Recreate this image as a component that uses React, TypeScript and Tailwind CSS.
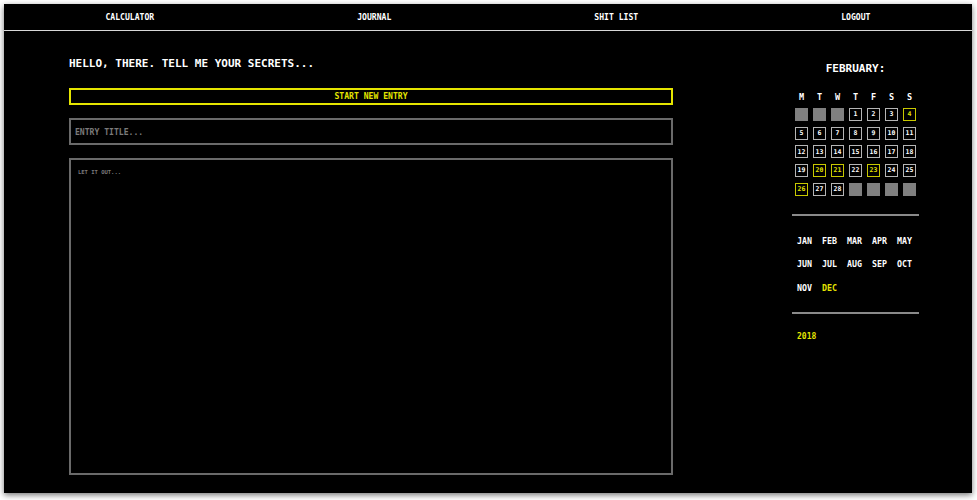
import React from "react";

const Y = "#e5e500";

type Cell = { n?: number; hl?: boolean };

const rows: Cell[][] = [
  [{}, {}, {}, { n: 1 }, { n: 2 }, { n: 3 }, { n: 4, hl: true }],
  [5, 6, 7, 8, 9, 10, 11].map((n) => ({ n })),
  [12, 13, 14, 15, 16, 17, 18].map((n) => ({ n })),
  [{ n: 19 }, { n: 20, hl: true }, { n: 21, hl: true }, { n: 22 }, { n: 23, hl: true }, { n: 24 }, { n: 25 }],
  [{ n: 26, hl: true }, { n: 27 }, { n: 28 }, {}, {}, {}, {}],
];

const months = ["JAN", "FEB", "MAR", "APR", "MAY", "JUN", "JUL", "AUG", "SEP", "OCT", "NOV", "DEC"];

export default function App() {
  const font = { fontFamily: '"DejaVu Sans Mono", "Liberation Mono", monospace' };
  return (
    <div className="w-[977px] h-[500px] bg-white pt-[4px] pl-[4px]" style={font}>
      <div className="w-[968px] h-[489px] bg-black flex flex-col shadow-[0_2px_6px_rgba(0,0,0,0.55)] font-bold">
        <nav className="h-[27px] shrink-0 flex justify-around items-center border-b-[1.5px] border-[#d8d8d8] text-white text-[8.1px] leading-none">
          <span>CALCULATOR</span>
          <span>JOURNAL</span>
          <span>SHIT LIST</span>
          <span>LOGOUT</span>
        </nav>
        <div className="flex pl-[65px]">
          <div className="w-[604px] flex flex-col pt-[26px]">
            <h1 className="text-white text-[11px] leading-[14px]">HELLO, THERE. TELL ME YOUR SECRETS...</h1>
            <button
              className="mt-[17px] h-[17px] border-2 flex items-center justify-center text-[8.1px] leading-none"
              style={{ borderColor: Y, color: Y }}
            >
              START NEW ENTRY
            </button>
            <input
              className="mt-[13px] h-[27px] border-2 border-[#6a6a6a] bg-black pl-[4px] text-[8.1px] text-white placeholder:text-[#7a7a7a] outline-none font-bold"
              placeholder="ENTRY TITLE..."
            />
            <textarea
              className="mt-[13px] h-[317px] border-2 border-[#6a6a6a] bg-black pl-[7px] pt-[8px] text-[5.5px] leading-[8px] text-white placeholder:text-[#7a7a7a] outline-none resize-none font-bold"
              placeholder="LET IT OUT..."
            />
          </div>
          <div className="ml-[119px] w-[127px] flex flex-col pt-[31px]">
            <div className="text-white text-[11px] leading-[14px] text-center">FEBRUARY:</div>
            <div className="mt-[15.5px] grid grid-cols-[repeat(7,13px)] gap-x-[5px] justify-center text-white text-[8.5px] leading-[10px]">
              {["M", "T", "W", "T", "F", "S", "S"].map((d, i) => (
                <span key={i} className="text-center">{d}</span>
              ))}
            </div>
            <div className="mt-[6.5px] grid grid-cols-[repeat(7,13px)] auto-rows-[13px] gap-x-[5px] gap-y-[5.7px] justify-center">
              {rows.flat().map((c, i) =>
                c.n === undefined ? (
                  <div key={i} className="bg-[#808080]" />
                ) : (
                  <div
                    key={i}
                    className={`border-[1.5px] flex items-center justify-center text-[6.5px] leading-none ${
                      c.hl ? "" : "border-[#b5b5b5] text-white"
                    }`}
                    style={c.hl ? { borderColor: "#c8c800", color: Y } : undefined}
                  >
                    {c.n}
                  </div>
                )
              )}
            </div>
            <div className="mt-[18.5px] h-[2px] bg-[#8a8a8a]" />
            <div className="mt-[18.5px] pl-[5px] grid grid-cols-[repeat(5,25px)] gap-y-[11.5px] text-[8.3px] leading-[12px] text-white">
              {months.map((m) => (
                <span key={m} style={m === "DEC" ? { color: Y } : undefined}>
                  {m}
                </span>
              ))}
            </div>
            <div className="mt-[18.5px] h-[2px] bg-[#8a8a8a]" />
            <div className="mt-[17px] pl-[5px] text-[8px] leading-[12px]" style={{ color: Y }}>
              2018
            </div>
          </div>
        </div>
      </div>
    </div>
  );
}
